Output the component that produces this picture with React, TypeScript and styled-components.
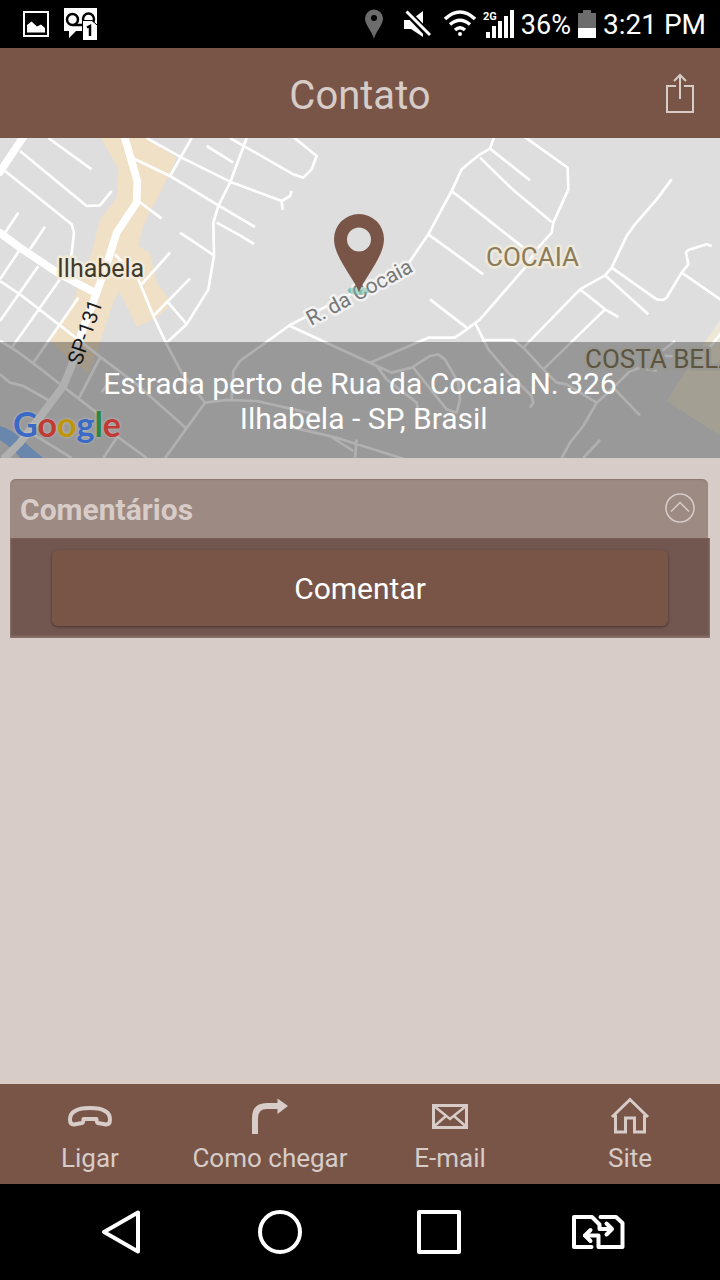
import React from "react";
import styled, { createGlobalStyle } from "styled-components";

const brown = "#795548";
const sand = "#d7ccc8";

const GlobalStyle = createGlobalStyle`
  *, *::before, *::after { box-sizing: border-box; }
  body {
    margin: 0;
    background: ${sand};
    font-family: Roboto, "Liberation Sans", sans-serif;
  }
  button { font: inherit; border: 0; padding: 0; background: none; cursor: pointer; }
  svg { display: block; flex: none; }
`;

const Page = styled.div`
  min-height: 100vh;
  display: flex;
  flex-direction: column;
`;

const StatusBar = styled.div`
  height: 48px;
  padding: 0 14px 0 22px;
  background: #000;
  color: #fff;
  display: flex;
  align-items: center;
  justify-content: space-between;
`;

const StatusGroup = styled.div<{ $gap: number }>`
  display: flex;
  align-items: center;
  gap: ${(p) => p.$gap}px;
`;

const StatusText = styled.span<{ $size: number }>`
  font-size: ${(p) => p.$size}px;
  line-height: 48px;
  padding-top: 2px;
  white-space: nowrap;
`;

const Header = styled.header`
  height: 90px;
  padding: 0 24px;
  background: ${brown};
  color: ${sand};
  display: grid;
  grid-template-columns: 32px 1fr 32px;
  align-items: center;
`;

const Title = styled.h1`
  grid-column: 2;
  margin: 0;
  padding-top: 6px;
  font-size: 40px;
  line-height: 48px;
  font-weight: 400;
  text-align: center;
`;

const IconButton = styled.button`
  color: inherit;
  display: flex;
  align-items: center;
  justify-content: center;
`;

const MapPanel = styled.section`
  display: grid;
  height: 320px;
  overflow: hidden;
  background: #dedede;
`;

const MapDrawing = styled.svg`
  grid-area: 1 / 1;
  width: 100%;
  height: 320px;
`;

const AddressBand = styled.div`
  grid-area: 1 / 1;
  align-self: end;
  z-index: 1;
  height: 116px;
  padding: 24px 16px 0;
  background: rgba(0, 0, 0, 0.31);
`;

const Address = styled.address`
  color: #fff;
  font-style: normal;
  font-size: 30px;
  line-height: 35px;
  text-align: center;
`;

const GoogleMark = styled.span`
  grid-area: 1 / 1;
  align-self: end;
  justify-self: start;
  z-index: 2;
  padding: 0 0 12px 13px;
  font-family: Lato, sans-serif;
  font-size: 34px;
  line-height: 44px;
  font-weight: 700;
  text-shadow: 0 0 3px rgba(255, 255, 255, 0.4);
`;

const Letter = styled.span<{ $color: string }>`
  color: ${(p) => p.$color};
`;

const Content = styled.main`
  flex: 1;
  padding: 21px 10px;
`;

const CardHeader = styled.div`
  height: 59px;
  margin-right: 2px;
  padding: 0 12px 0 10px;
  background: #9d8a83;
  border-radius: 6px 6px 0 0;
  box-shadow: inset 0 1px 1px #8b7771;
  color: ${sand};
  display: flex;
  align-items: center;
  justify-content: space-between;
`;

const CardTitle = styled.h2`
  margin: 0;
  padding-top: 2px;
  font-size: 30px;
  line-height: 36px;
  font-weight: 700;
`;

const CardBody = styled.div`
  height: 100px;
  padding: 12px 42px 12px;
  background: #725750;
  box-shadow: inset 0 -1px 2px 1px #8a716a;
`;

const CommentButton = styled.button`
  width: 100%;
  height: 76px;
  padding-top: 2px;
  border-radius: 6px;
  background: ${brown};
  box-shadow: 0 1px 3px rgba(50, 25, 20, 0.6);
  color: #fff;
  font-size: 30px;
  line-height: 36px;
`;

const ActionBar = styled.nav`
  height: 100px;
  background: ${brown};
  display: grid;
  grid-template-columns: repeat(4, 1fr);
`;

const Action = styled.a`
  padding-top: 10px;
  color: ${sand};
  text-decoration: none;
  font-size: 26px;
  line-height: 32px;
  text-align: center;
  display: flex;
  flex-direction: column;
  align-items: center;
  gap: 4px;
`;

const SystemBar = styled.nav`
  height: 96px;
  padding: 0 40px;
  background: #000;
  color: #fff;
  display: grid;
  grid-template-columns: repeat(4, 1fr);
`;

const highways = [
  "M370 -10L412 135L410 200L350 290L325 370L290 470L245 590L215 690L190 750L130 830L60 920L10 970",
  "M-5 115L75 -5",
  "M-5 287L60 335L180 415L285 470",
];

const streets = [
  "M60 45L260 210L300 208L335 165", "M145 6L275 100", "M15 105L215 265L222 290L213 370",
  "M55 230L15 290", "M135 272L90 340", "M0 435L60 475L150 545L300 662L410 745L560 878",
  "M60 340L0 430", "M115 390L0 555", "M180 430L35 635", "M235 485L100 680",
  "M0 615L50 645L130 705L200 760L290 830", "M0 715L30 740L70 750L150 795", "M300 665L235 790",
  "M330 735L305 768", "M100 895L215 966", "M350 900L440 966M350 905L310 966", "M615 800L495 966",
  "M385 60L510 120L650 205L765 273", "M440 6L545 65L690 137L845 195L870 180L875 165M845 195L848 222",
  "M575 6L510 120", "M620 30L700 80", "M740 6L690 140L655 210L640 260L642 360L625 460L560 565L500 620",
  "M650 260L720 298L762 324", "M540 290L642 358", "M415 195L485 248", "M510 350L425 445",
  "M570 428L460 540", "M505 500L558 562", "M345 355L415 430L460 540L500 625L545 710L615 800L680 792L770 795L960 838",
  "M690 6L880 115L910 125L935 100L950 60L870 -5",
  "M695 790L700 705L720 675L870 567L1060 470L1220 390L1285 295L1325 220L1355 165L1385 100L1440 55L1470 38L1485 -5",
  "M870 570L1110 680L1175 710L1235 695L1290 660L1315 655L1335 670L1375 740L1380 790L1370 830L1340 820L1240 695",
  "M1110 680L1285 605L1365 605L1400 580L1440 550L1575 395L1610 340L1655 290L1660 260L1705 160L1703 95L1570 0",
  "M1285 295L1450 415", "M1355 165L1440 232L1570 335", "M1440 65L1540 162L1655 258", "M1470 38L1590 133",
  "M1290 490L1400 575", "M1425 560L1465 640L1525 710L1595 780L1600 800L1590 815",
  "M1445 612L1540 612L1570 635L1630 700L1670 740L1700 745L1790 800",
  "M1570 635L1740 460L1815 418L1835 395L1880 300L1905 265L1970 190L2015 130",
  "M1630 700L1815 520", "M1740 460L1815 520L1855 543", "M1815 418L1945 535",
  "M1835 395L1970 490L1990 492L2000 485L2045 410L2065 385L2058 350L2065 342L2120 325L2135 330",
  "M2045 410L2165 493", "M1685 966L1710 920L1750 870L1790 800L1840 755L1890 705L1920 695L1970 705",
  "M1840 755L1920 838", "M1750 966L1800 912", "M1960 665L2025 615M1990 660L2050 660",
  "M880 875L1010 905L1215 970M1070 910L1065 966M990 900L1060 945", "M1130 690L1160 730L1250 800L1260 850",
  "M2165 590L2100 670",
];

const Streets = () => (
  <MapDrawing viewBox="0 0 720 320" preserveAspectRatio="xMidYMid slice" role="img" aria-label="Mapa de Ilhabela">
    <g transform="translate(0 -2) scale(0.33333)" fill="none" strokeLinejoin="round">
      <path fill="#dedede" d="M0 0H2160V966H0Z" />
      <path fill="#efe0c6" d="M300 0L355 100L350 185L300 250L275 350L240 440L210 520L150 610L175 640L265 710L300 620L340 500L355 465L375 500L410 572L470 545L505 515L500 480L470 440L450 350L415 330L430 270L470 190L510 110L530 65L430 0Z" />
      <path fill="#98c2fa" d="M0 870Q35 880 65 910Q90 935 130 966H62Q35 935 0 912Z" />
      <path fill="#ece8d5" d="M2165 545L2115 618L2000 795L2165 902Z" />
      <path stroke="#fff" strokeWidth="8" d={streets.join("")} />
      <path stroke="#fff" strokeWidth="23" d={highways.join("")} />
      <ellipse cx="1077" cy="463" rx="34" ry="13" fill="#8fc4b4" />
    </g>
    <g fontSize="26" strokeWidth="5" strokeLinejoin="round" paintOrder="stroke">
      <text x="57" y="139" fontSize="25" fill="#403a2c" stroke="#f3ead9">Ilhabela</text>
      <text x="486" y="128" fill="#8a7b5a" stroke="#efe9dc">COCAIA</text>
      <text x="585" y="230" fill="#867c60" stroke="#dedbd2">COSTA BELA</text>
      <text transform="translate(81 228) rotate(-71)" fontSize="21" fill="#1c1c1c" stroke="none">SP-131</text>
      <text transform="translate(311 188) rotate(-28)" fontSize="21" fill="#777" stroke="#f2f2f2">R. da Cocaia</text>
    </g>
    <ellipse cx="359" cy="153" rx="11" ry="4" fill="#6fb5a1" opacity="0.5" />
    <path fill={brown} fillRule="evenodd" d="M359 154C353 139 334 119 334 101A25 25 0 0 1 384 101C384 119 365 139 359 154ZM359 89.500A12 12 0 1 0 359 113.500A12 12 0 1 0 359 89.500Z" />
  </MapDrawing>
);

const googleLetters: [string, string][] = [
  ["G", "#3a69c6"], ["o", "#c23a34"], ["o", "#bd960c"], ["g", "#3a69c6"], ["l", "#2c8746"], ["e", "#c23a34"],
];

const actions = [
  {
    label: "Ligar", href: "#ligar",
    icon: (
      <svg width="46" height="44" viewBox="0 0 46 44" fill="none" stroke="currentColor" strokeWidth="4" strokeLinejoin="round">
        <path d="M3 25.500C3 17 11 14 23 14S43 17 43 25.500C43 29 41.500 30.500 39 30.500L31 29C29.500 28.500 29.500 27 29.500 25H16.500C16.500 27 16.500 28.500 15 29L7 30.500C4.500 30.500 3 29 3 25.500Z" />
      </svg>
    ),
  },
  {
    label: "Como chegar", href: "#rota",
    icon: (
      <svg width="40" height="44" viewBox="0 0 40 44" fill="none">
        <path d="M5 40V24Q5 12 17 12H29" stroke="currentColor" strokeWidth="6" />
        <path d="M27.500 4.500L38 12L27.500 20Z" fill="currentColor" />
      </svg>
    ),
  },
  {
    label: "E-mail", href: "#email",
    icon: (
      <svg width="40" height="44" viewBox="0 0 40 44" fill="none" stroke="currentColor">
        <path strokeWidth="3" d="M3.500 11.500H36.500V33.500H3.500Z" />
        <path strokeWidth="2.500" d="M4 12L20 25L36 12M4 32.500L16 22M36 32.500L24 22" />
      </svg>
    ),
  },
  {
    label: "Site", href: "#site",
    icon: (
      <svg width="40" height="44" viewBox="0 0 40 44" fill="none" stroke="currentColor" strokeWidth="3">
        <path d="M2 23L20 5.500L38 23M5.500 21V38H15.500V24H24.500V38H34.500V21" />
      </svg>
    ),
  },
];

const systemKeys = [
  { label: "Voltar", shape: <path d="M46 8.500V47.500L12 28Z" /> },
  { label: "Início", shape: <circle cx="28" cy="28" r="20" /> },
  { label: "Recentes", shape: <path d="M7 8H47V48H7Z" /> },
  {
    label: "Trocar chip",
    shape: (
      <>
        <path d="M19.500 43H2V13H20L27.500 20.500V25H39" />
        <path d="M28.500 13H44L50.500 19V43H26.500V31.500H13" />
        <path d="M34.500 19.500L40 25L34.500 30.500M18.500 26L13 31.500L18.500 37" />
      </>
    ),
  },
];

export default function App() {
  return (
    <Page>
      <GlobalStyle />
      <StatusBar>
        <StatusGroup $gap={14}>
          <svg width="28" height="28" viewBox="0 0 28 28">
            <path d="M2 2H26V26H2Z" fill="none" stroke="#fff" strokeWidth="2" />
            <path d="M5 22.500V15L9.500 11.500L15 16.500L19 14.500L23 18V22.500Z" fill="#fff" />
          </svg>
          <svg width="34" height="34" viewBox="0 0 34 34">
            <path d="M0 1H33V33H19V24H12L5 31V24H0Z" fill="#fff" />
            <path d="M9 18H24" stroke="#000" strokeWidth="2.500" />
            <circle cx="8.500" cy="12.500" r="5.500" fill="#fff" stroke="#000" strokeWidth="2.500" />
            <circle cx="24.500" cy="12" r="5.500" fill="#fff" stroke="#000" strokeWidth="2.500" />
            <path d="M19 14H28L33 18V33H19Z" fill="#fff" />
            <path d="M18.500 33V13.500H28L33 18" fill="none" stroke="#000" />
            <path d="M23 20.500L26 19V29" fill="none" stroke="#000" strokeWidth="2.500" />
          </svg>
        </StatusGroup>
        <StatusGroup $gap={7}>
          <svg width="32" height="32" viewBox="0 0 32 32">
            <path fill="#6c6c6c" fillRule="evenodd" d="M10 31C8 23 1 17 1 10.500A9 9 0 0 1 19 10.500C19 17 12 23 10 31ZM10 7A3 3 0 1 0 10 13A3 3 0 1 0 10 7Z" />
          </svg>
          <svg width="34" height="32" viewBox="0 0 34 32">
            <path d="M1 12H8L20 3V29L8 21H1Z" fill="#fff" />
            <path d="M2 2L27 28" stroke="#000" strokeWidth="7" />
            <path d="M3.500 3.500L27 27" stroke="#fff" strokeWidth="3" />
          </svg>
          <svg width="32" height="32" viewBox="0 0 32 32" fill="none" stroke="#fff" strokeWidth="3.500">
            <path d="M1 11Q16 -3 31 11M6 16.500Q16 8 26 16.500M11 22Q16 17.500 21 22" />
            <circle cx="16" cy="26" r="2" fill="#fff" stroke="none" />
          </svg>
          <svg width="31" height="32" viewBox="0 0 31 32" fill="#fff">
            <text x="0" y="12" fontSize="11" fontWeight="700">2G</text>
            <path d="M3 24H7V30H3ZM9 18H13V30H9ZM15 13H19V30H15ZM21 8H25V30H21ZM27 2H31V30H27Z" />
          </svg>
          <StatusText $size={27}>36%</StatusText>
          <svg width="18" height="32" viewBox="0 0 18 32">
            <path d="M5 2H13V5H18V20H0V5H5Z" fill="#6c6c6c" />
            <path d="M0 20H18V30H0Z" fill="#fff" />
          </svg>
          <StatusText $size={28}>3:21 PM</StatusText>
        </StatusGroup>
      </StatusBar>

      <Header>
        <Title>Contato</Title>
        <IconButton aria-label="Compartilhar">
          <svg width="32" height="42" viewBox="0 0 32 42" fill="none" stroke="currentColor" strokeWidth="2">
            <path d="M12 14H3V40H29V14H20M16 27V3M10 9L16 3L22 9" />
          </svg>
        </IconButton>
      </Header>

      <MapPanel>
        <Streets />
        <AddressBand>
          <Address>
            Estrada perto de Rua da Cocaia N. 326
            <br />
            &nbsp;Ilhabela - SP, Brasil
          </Address>
        </AddressBand>
        <GoogleMark>
          {googleLetters.map(([letter, color], i) => (
            <Letter key={i} $color={color}>{letter}</Letter>
          ))}
        </GoogleMark>
      </MapPanel>

      <Content>
        <CardHeader>
          <CardTitle>Comentários</CardTitle>
          <IconButton aria-label="Recolher comentários">
            <svg width="32" height="32" viewBox="0 0 32 32" fill="none" stroke="currentColor" strokeWidth="1.500">
              <circle cx="16" cy="15" r="14" />
              <path d="M7 18.500L16 9.500L25 18.500" />
            </svg>
          </IconButton>
        </CardHeader>
        <CardBody>
          <CommentButton>Comentar</CommentButton>
        </CardBody>
      </Content>

      <ActionBar>
        {actions.map((a) => (
          <Action key={a.label} href={a.href}>
            {a.icon}
            {a.label}
          </Action>
        ))}
      </ActionBar>

      <SystemBar>
        {systemKeys.map((k) => (
          <IconButton key={k.label} aria-label={k.label}>
            <svg width="56" height="56" viewBox="0 0 56 56" fill="none" stroke="currentColor" strokeWidth="4" strokeLinejoin="round" strokeLinecap="round">
              {k.shape}
            </svg>
          </IconButton>
        ))}
      </SystemBar>
    </Page>
  );
}
